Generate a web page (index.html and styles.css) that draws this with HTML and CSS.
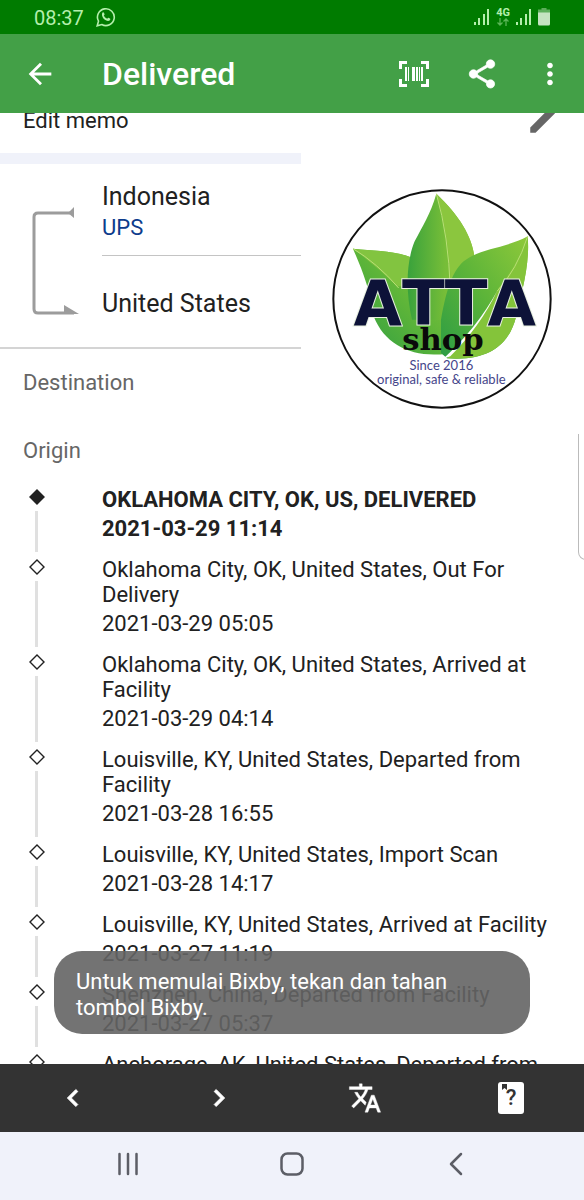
FILE: index.html
```html
<!DOCTYPE html>
<html lang="en">
<head>
	<meta charset="UTF-8">
	<meta name="viewport" content="width=device-width, initial-scale=1">
	<title>Delivered</title>
	<link rel="stylesheet" href="styles.css">
</head>
<body>
	<div class="status">
		<span class="time">08:37</span>
		<svg class="whatsapp" width="20" height="20" viewBox="0 0 20 20" fill="none" stroke="currentColor" stroke-width="1.6">
			<path d="M1.2 18.8l1.3-4.6a8.4 8.4 0 1 1 3.3 3.3z"/>
			<path d="M6.8 5.3c.5-.3 1 0 1.2.6l.6 1.4c.1.4-.6 1-.8 1.3.7 1.5 1.8 2.5 3.3 3.1.4-.3.9-1.1 1.3-1l1.6.8c.6.3.3 1.6-.4 2.1-1.6 1.2-4.3-.2-5.6-1.5S4.9 7.3 6.8 5.3z" fill="currentColor" stroke="none"/>
		</svg>
		<div class="signals">
			<svg width="16" height="18" viewBox="0 0 16 18" fill="currentColor"><path d="M0 14h2v3H0zM4 10h2v7H4zM9 6h2v11H9zM13 1h2v16h-2z"/></svg>
			<div class="net">
				<span>4G</span>
				<svg width="12" height="8" viewBox="0 0 12 8" fill="none" stroke="currentColor" stroke-width="1.3"><path d="M3 0v7M.5 4.500L3 7l2.500-2.500M9 8V1M6.500 3.500L9 1l2.500 2.500"/></svg>
			</div>
			<svg width="16" height="18" viewBox="0 0 16 18" fill="currentColor"><path d="M0 14h2v3H0zM4 10h2v7H4zM9 6h2v11H9zM13 1h2v16h-2z"/></svg>
			<svg class="battery" width="12" height="18" viewBox="0 0 12 18"><path d="M3.500 0h5v1.500H12V5H0V1.500h3.500z" fill="#5cae5a"/><path d="M0 4.500h12V16a1.500 1.500 0 0 1-1.500 1.500h-9A1.500 1.500 0 0 1 0 16z" fill="#c5e3c1"/></svg>
		</div>
	</div>

	<header class="appbar">
		<button class="back" aria-label="Back">
			<svg class="icon" viewBox="0 0 24 24"><path d="M20 11H7.830l5.590-5.590L12 4l-8 8 8 8 1.410-1.410L7.830 13H20v-2z"/></svg>
		</button>
		<h1>Delivered</h1>
		<button aria-label="Scan barcode">
			<svg width="30" height="26" viewBox="0 0 30 26"><path d="M0 0h8v3H3v5H0zM22 0h8v8h-3V3h-5zM0 18h3v5h5v3H0zM27 18h3v8h-8v-3h5zM6 6h2v14H6zM9 6h1v14H9zM13 6h3v14h-3zM17 6h2v14h-2zM20 6h1v14h-1zM22 6h2v14h-2z"/></svg>
		</button>
		<button aria-label="Share">
			<svg class="icon" viewBox="0 0 24 24"><path d="M18 16.080c-.76 0-1.440.3-1.960.77L8.910 12.700c.05-.23.09-.46.09-.7s-.04-.47-.09-.7l7.050-4.110c.54.5 1.250.81 2.040.81 1.660 0 3-1.340 3-3s-1.340-3-3-3-3 1.340-3 3c0 .24.04.47.09.7L8.040 9.810C7.500 9.310 6.790 9 6 9c-1.660 0-3 1.340-3 3s1.340 3 3 3c.79 0 1.500-.31 2.040-.81l7.120 4.160c-.05.21-.08.43-.08.65 0 1.610 1.310 2.920 2.920 2.920s2.920-1.310 2.920-2.920-1.310-2.920-2.920-2.920z" stroke="#fff" stroke-width=".5"/></svg>
		</button>
		<button aria-label="More options">
			<svg class="icon" viewBox="0 0 24 24"><path d="M12 8c1.100 0 2-.9 2-2s-.9-2-2-2-2 .9-2 2 .9 2 2 2zm0 2c-1.100 0-2 .9-2 2s.9 2 2 2 2-.9 2-2-.9-2-2-2zm0 6c-1.100 0-2 .9-2 2s.9 2 2 2 2-.9 2-2-.9-2-2-2z"/></svg>
		</button>
	</header>

	<main>
		<div class="memo">
			<span>Edit memo</span>
			<button aria-label="Edit memo">
				<svg class="icon" viewBox="0 0 24 24"><path d="M3 17.250V21h3.750L20.500 7.250 16.750 3.500z"/></svg>
			</button>
		</div>

		<section class="summary">
			<div class="info">
				<div class="route">
					<svg class="bracket" width="48" height="110" viewBox="0 0 48 110">
						<path d="M38 6H6Q2 6 2 10v92q0 4 4 4h36" fill="none" stroke="#9c9c9c" stroke-width="3"/>
						<path d="M36 6l6-6v11zM32 98l15 9H32z" fill="#9c9c9c"/>
					</svg>
					<div class="places">
						<div class="from">
							<p class="country">Indonesia</p>
							<a href="#">UPS</a>
						</div>
						<div class="to">
							<p class="country">United States</p>
						</div>
					</div>
				</div>
				<h2>Destination</h2>
			</div>
			<svg class="logo" viewBox="35 28 660 660" role="img" aria-label="ATTA shop">
				<defs>
					<linearGradient id="mid" x1="0" y1="0" x2="1" y2="0">
						<stop offset="0" stop-color="#39a23c"/>
						<stop offset=".55" stop-color="#76bd38"/>
						<stop offset="1" stop-color="#8cc63c"/>
					</linearGradient>
					<linearGradient id="side" x1="0" y1="1" x2="1" y2="0">
						<stop offset="0" stop-color="#2c9c44"/>
						<stop offset=".5" stop-color="#5cb439"/>
						<stop offset="1" stop-color="#8fc93a"/>
					</linearGradient>
				</defs>
				<circle cx="365" cy="358" r="326" fill="#fff" stroke="#111" stroke-width="6"/>
				<path d="M98 207C170 216 225 208 300 245L370 340 380 522C280 535 195 500 160 410C150 330 125 270 98 207z" fill="url(#side)"/>
				<path d="M98 207C170 216 225 208 300 245L310 320H230Q170 260 98 207z" fill="#82c440"/>
				<path d="M98 207Q170 250 235 325" fill="none" stroke="#b9df76" stroke-width="3"/>
				<path d="M348 42C430 120 465 190 464 260L392 420H275C252 320 262 235 283 185C306 140 330 105 348 42z" fill="url(#mid)"/>
				<path d="M348 42C430 120 465 190 464 260L392 340Q390 180 348 42z" fill="#8bc63e"/>
				<path d="M348 42Q385 170 390 330" fill="none" stroke="#b9df76" stroke-width="3"/>
				<path d="M622 170C560 205 480 205 430 245C390 280 375 350 362 420V520L380 536C500 545 565 500 587 412C600 350 630 260 622 170z" fill="url(#side)"/>
				<path d="M622 170C630 260 600 350 587 412C565 500 500 545 380 536Q485 430 535 325Q595 250 622 170z" fill="#84c43a"/>
				<path d="M622 170Q590 270 530 335" fill="none" stroke="#b9df76" stroke-width="3"/>
				<path d="M530 335Q470 445 368 538L390 530Q480 440 530 335z" fill="#fff"/>
				<text class="brand" x="373" y="436">ATTA</text>
				<text class="shop" x="368" y="510">shop</text>
				<text class="since" x="363" y="570">Since 2016</text>
				<text class="since" x="363" y="613">original, safe &amp; reliable</text>
			</svg>
		</section>

		<h2>Origin</h2>
		<ol class="timeline">
			<li class="latest">
				<div class="marker"><svg viewBox="0 0 16 16"><path d="M8 1l7 7-7 7-7-7z"/></svg></div>
				<div class="event">
					<p>OKLAHOMA CITY, OK, US, DELIVERED</p>
					<time>2021-03-29 11:14</time>
				</div>
			</li>
			<li>
				<div class="marker"><svg viewBox="0 0 16 16"><path d="M8 1l7 7-7 7-7-7z"/></svg></div>
				<div class="event">
					<p>Oklahoma City, OK, United States, Out For Delivery</p>
					<time>2021-03-29 05:05</time>
				</div>
			</li>
			<li>
				<div class="marker"><svg viewBox="0 0 16 16"><path d="M8 1l7 7-7 7-7-7z"/></svg></div>
				<div class="event">
					<p>Oklahoma City, OK, United States, Arrived at Facility</p>
					<time>2021-03-29 04:14</time>
				</div>
			</li>
			<li>
				<div class="marker"><svg viewBox="0 0 16 16"><path d="M8 1l7 7-7 7-7-7z"/></svg></div>
				<div class="event">
					<p>Louisville, KY, United States, Departed from Facility</p>
					<time>2021-03-28 16:55</time>
				</div>
			</li>
			<li>
				<div class="marker"><svg viewBox="0 0 16 16"><path d="M8 1l7 7-7 7-7-7z"/></svg></div>
				<div class="event">
					<p>Louisville, KY, United States, Import Scan</p>
					<time>2021-03-28 14:17</time>
				</div>
			</li>
			<li>
				<div class="marker"><svg viewBox="0 0 16 16"><path d="M8 1l7 7-7 7-7-7z"/></svg></div>
				<div class="event">
					<p>Louisville, KY, United States, Arrived at Facility</p>
					<time>2021-03-27 11:19</time>
				</div>
			</li>
			<li>
				<div class="marker"><svg viewBox="0 0 16 16"><path d="M8 1l7 7-7 7-7-7z"/></svg></div>
				<div class="event">
					<p>Shenzhen, China, Departed from Facility</p>
					<time>2021-03-27 05:37</time>
				</div>
			</li>
			<li>
				<div class="marker"><svg viewBox="0 0 16 16"><path d="M8 1l7 7-7 7-7-7z"/></svg></div>
				<div class="event">
					<p>Anchorage, AK, United States, Departed from</p>
				</div>
			</li>
		</ol>

		<div class="edge"></div>
		<div class="toast" role="status">Untuk memulai Bixby, tekan dan tahan tombol Bixby.</div>
	</main>

	<div class="toolbar">
		<button aria-label="Previous">
			<svg class="icon" viewBox="0 0 24 24"><path d="M15.410 7.410L14 6l-6 6 6 6 1.410-1.410L10.830 12z" stroke="#fff" stroke-width=".6"/></svg>
		</button>
		<button aria-label="Next">
			<svg class="icon" viewBox="0 0 24 24"><path d="M10 6L8.590 7.410 13.170 12l-4.580 4.590L10 18l6-6z" stroke="#fff" stroke-width=".6"/></svg>
		</button>
		<button aria-label="Translate">
			<svg class="icon" viewBox="0 0 24 24"><path d="M12.870 15.070l-2.540-2.510.03-.03c1.740-1.940 2.980-4.170 3.710-6.530H17V4h-7V2H8v2H1v1.990h11.170C11.500 7.920 10.440 9.750 9 11.350 8.070 10.320 7.300 9.190 6.690 8h-2c.73 1.630 1.730 3.170 2.980 4.560l-5.090 5.020L4 19l5-5 3.110 3.110.76-2.040zM18.500 10h-2L12 22h2l1.120-3h4.750L21 22h2l-4.500-12zm-2.620 7l1.620-4.330L19.120 17h-3.240z" stroke="#fff" stroke-width=".3"/></svg>
		</button>
		<button aria-label="Help">
			<svg width="26" height="32" viewBox="0 0 26 32">
				<rect width="26" height="32" rx="3"/>
				<path d="M4 2h5v6L6.500 6 4 8z" fill="#333"/>
				<text class="mark" x="13" y="23">?</text>
			</svg>
		</button>
	</div>

	<nav class="sysnav">
		<button aria-label="Recent apps">
			<svg width="24" height="24" viewBox="0 0 24 24"><path d="M3.500 2v20M12 2v20M20.500 2v20"/></svg>
		</button>
		<button aria-label="Home">
			<svg width="24" height="24" viewBox="0 0 24 24"><rect x="1.500" y="1.500" width="21" height="21" rx="6"/></svg>
		</button>
		<button aria-label="Back">
			<svg width="24" height="24" viewBox="0 0 24 24"><path d="M17 2L7 12l10 10"/></svg>
		</button>
	</nav>
</body>
</html>
```
FILE: styles.css
```css
* {margin: 0;padding: 0;box-sizing: border-box;}
body {display: flex;flex-direction: column;height: 100vh;font: 22px/25px Roboto, "Liberation Sans", sans-serif;color: #212121;background: #fff;}
button {display: flex;align-items: center;justify-content: center;border: 0;background: none;color: inherit;cursor: pointer;}
svg {display: block;flex: none;}
ol {list-style: none;}
.icon {width: 34px;height: 34px;fill: currentColor;}

/* status bar */
.status {display: flex;align-items: center;flex: none;height: 34px;padding: 0 34px;color: #b4efac;background: #007b00;}
.time {padding-top: 2px;font-size: 20px;}
.whatsapp {margin-left: 12px;}
.signals {display: flex;align-items: center;gap: 6px;margin-left: auto;}
.net {display: flex;flex-direction: column;align-items: center;font-size: 11px;font-weight: 700;line-height: 10px;}
.net svg {opacity: .5;}

/* title bar */
.appbar {display: flex;align-items: center;flex: none;height: 79px;color: #fff;background: #43a047;}
.appbar button {width: 68px;height: 68px;}
.appbar svg {fill: currentColor;}
.appbar .back {margin-left: 6px;}
.appbar h1 {flex: 1;padding-left: 28px;font-size: 32px;font-weight: 500;line-height: 40px;}

main {position: relative;flex: 1;min-height: 0;overflow: hidden;}
.memo {display: flex;align-items: center;justify-content: space-between;height: 66px;margin-top: -26px;padding: 0 24px 0 23px;}
.memo button {color: #666;}
h2 {padding: 0 23px;font-size: 22px;font-weight: 400;line-height: 68px;color: #666;}

.summary {display: flex;}
.info {flex: 1;border-top: 11px solid #f0f2fa;}
.route {display: flex;border-bottom: 2px solid #d4d4d4;}
.bracket {margin: 43px 22px 0 32px;}
.places {flex: 1;}
.country {font-size: 25px;line-height: 30px;}
.from {height: 92px;padding-top: 18px;border-bottom: 1px solid #c4c4c4;}
.from a {display: block;line-height: 32px;color: #0d3c8c;text-decoration: none;}
.to {display: flex;align-items: center;height: 91px;padding-top: 4px;}
.logo {width: 220px;height: 220px;margin: 36px 32px 0 31px;}
.brand {font: 700 188px "DejaVu Sans", sans-serif;font-kerning: none;fill: #0d1238;stroke: #e8f0e0;stroke-width: 6px;paint-order: stroke;text-anchor: middle;}
.shop {font: 700 92px "DejaVu Serif", serif;fill: #0a0a0a;text-anchor: middle;}
.since {font: 39px Lato, sans-serif;fill: #45458a;text-anchor: middle;}

/* tracking events */
.timeline {padding-top: 2px;}
.timeline li {display: flex;padding-right: 23px;}
.marker {display: flex;flex-direction: column;align-items: center;flex: none;width: 73px;margin-right: 29px;}
.marker svg {width: 16px;height: 16px;margin-top: 2px;fill: #fff;stroke: #212121;stroke-width: 1.4;}
.marker::after {content: "";flex: 1;width: 3px;margin: 6px 0 5px;background: #e0e0e0;}
.event {flex: 1;padding-bottom: 16px;}
.event time {display: block;margin-top: 4px;}
.latest {font-weight: 700;}
.latest .marker svg {fill: #212121;}

.edge {position: absolute;top: 321px;right: -8px;width: 14px;height: 126px;border: 1px solid #bbb;border-top: 0;border-radius: 0 0 0 8px;background: #fff;}
.toast {position: absolute;left: 54px;right: 54px;bottom: 30px;padding: 18px 22px 13px;border-radius: 28px;line-height: 26px;color: #fff;background: rgba(100, 100, 100, .9);}

.toolbar {display: flex;flex: none;height: 68px;color: #fff;background: #333;}
.toolbar button {flex: 1;}
.toolbar svg {fill: currentColor;}
.mark {font: 500 22px Roboto, sans-serif;fill: #333;text-anchor: middle;}

.sysnav {display: flex;flex: none;height: 68px;padding: 0 8% 4px;background: #f0f2fa;}
.sysnav button {flex: 1;}
.sysnav svg {fill: none;stroke: #5c5e66;stroke-width: 2.5;stroke-linecap: round;stroke-linejoin: round;}
```
